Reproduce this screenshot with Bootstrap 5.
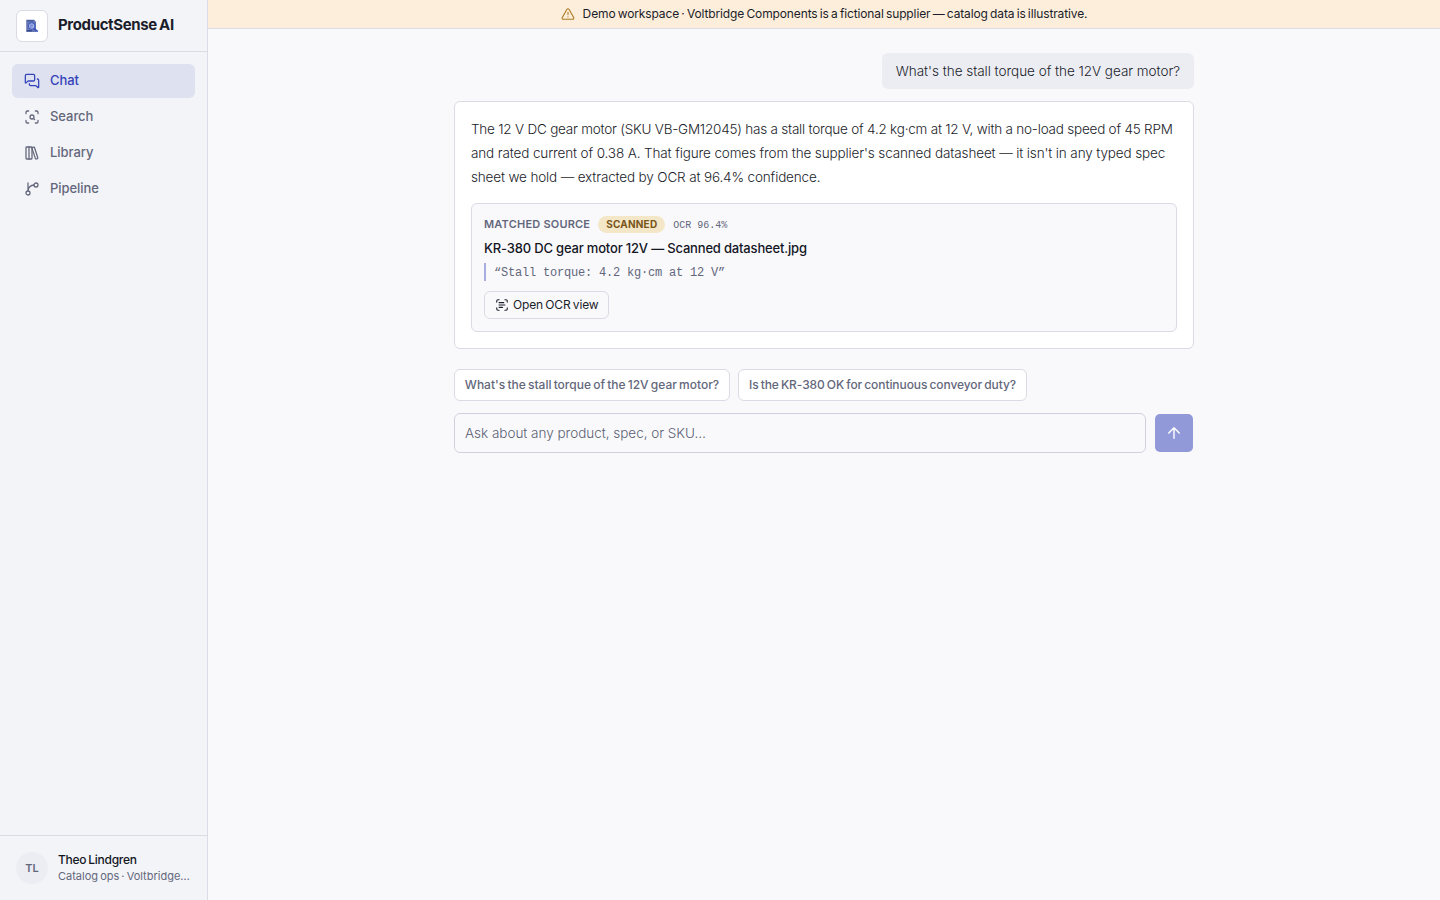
<!DOCTYPE html>
<html lang="en">
<head>
<meta charset="utf-8">
<meta name="viewport" content="width=device-width, initial-scale=1">
<title>ProductSense AI</title>
<link rel="stylesheet" href="https://cdn.jsdelivr.net/npm/bootstrap@5.3.0/dist/css/bootstrap.min.css">
<style>
  :root { --line: #d9dbe5; --ink: #1b1d2a; --soft: #63677b; --brand: #3543b9; }
  body { font-family: Inter, "Liberation Sans", sans-serif; font-size: 14px; color: var(--ink); background: #f9f9fc; }
  svg { flex: none; }
  .line-icon { fill: none; stroke: currentColor; stroke-width: 1.9; stroke-linecap: round; stroke-linejoin: round; }
  .sidebar { width: 208px; background: #f3f4f8; border-right: 1px solid var(--line); }
  .brand-bar { height: 52px; border-bottom: 1px solid var(--line); gap: 10px; }
  .brand-tile { width: 32px; height: 32px; background: #fff; border: 1px solid var(--line); border-radius: 6px; }
  .brand-name { font-size: 15px; font-weight: 650; letter-spacing: -.36px; word-spacing: -1px; line-height: 22px; padding-bottom: 2px; }
  .side-nav { padding: 12px; gap: 2px; }
  .side-nav .nav-link { height: 34px; padding: 0 12px; gap: 10px; border-radius: 6px; font-size: 13px; font-weight: 500; line-height: 1; color: var(--soft); letter-spacing: -.05px; }
  .side-nav .nav-link span { padding-bottom: 2px; }
  .side-nav .nav-link.active { background: #dde1f0; color: var(--brand); }
  .account { height: 65px; border-top: 1px solid var(--line); gap: 10px; }
  .avatar { width: 32px; height: 32px; background: #ecedf3; color: var(--soft); font-size: 11px; font-weight: 600; }
  .account-name { font-size: 12px; font-weight: 500; line-height: 16px; letter-spacing: -.26px; word-spacing: -1px; color: #14161f; }
  .account-role { font-size: 11px; line-height: 16px; letter-spacing: 0; word-spacing: -1px; color: var(--soft); }
  .demo-bar { height: 29px; background: #fdeedb; border-bottom: 1px solid var(--line); gap: 8px; font-size: 12px; letter-spacing: -.125px; word-spacing: -1px; }
  .demo-bar svg { color: #ab7a22; }
  .thread { width: 740px; padding-top: 24px; }
  .ask-bubble { height: 36px; padding: 0 14px; border-radius: 6px; background: #ecedf3; font-size: 13.5px; font-weight: 300; letter-spacing: -.03px; }
  .answer { margin-top: 12px; padding: 16px; border: 1px solid var(--line); border-radius: 6px; background: #fff; height: 248px; }
  .answer-text { height: 86px; font-size: 13.5px; font-weight: 300; line-height: 24px; margin-top: -1px; white-space: nowrap; }
  .run-a { letter-spacing: -.22px; } .run-b { letter-spacing: -.128px; } .run-c { letter-spacing: -.15px; }
  .source { height: 129px; padding: 12px; border: 1px solid var(--line); border-radius: 6px; background: #f9f9fc; }
  .source-tag { font-size: 11px; font-weight: 600; line-height: 17px; letter-spacing: .2px; color: var(--soft); }
  .pill { height: 17px; padding: 0 8px; border-radius: 9px; background: #f3e7c7; color: #785519; font-size: 10px; font-weight: 650; line-height: 17px; letter-spacing: .2px; }
  .mono { font-family: "Liberation Mono", monospace; }
  .ocr-score { font-size: 10px; line-height: 17px; padding-top: 1px; color: var(--soft); height: 17px; }
  .source-title { margin-top: 5px; font-size: 13px; font-weight: 500; line-height: 20px; letter-spacing: -.18px; color: #14161f; }
  .source-quote { margin-top: 5px; height: 18px; padding-left: 8px; border-left: 2px solid #a6addf; font-size: 12px; line-height: 20px; letter-spacing: -.2px; color: var(--soft); }
  .ocr-btn { --bs-btn-padding-y: 0; margin-top: 10px; height: 28px; width: 125px; padding: 0 10px; border: 1px solid var(--line); border-radius: 6px; font-size: 12px; font-weight: 400; line-height: 1; letter-spacing: -.15px; word-spacing: -.9px; gap: 4px; color: var(--ink); white-space: nowrap; }
  .suggest { margin-top: 20px; gap: 8px; }
  .suggest .btn { height: 32px; padding: 0; background: #fff; border: 1px solid var(--line); border-radius: 6px; font-size: 12px; font-weight: 500; line-height: 1; color: var(--soft); white-space: nowrap; word-spacing: -1px; }
  .chip-a { width: 276px; } .chip-b { width: 289px; letter-spacing: -.08px; }
  .composer { margin-top: 12px; gap: 8px; }
  .composer .form-control { height: 40px; padding: 0 10px; border: 1px solid #cfd1e0; border-radius: 6px; background: transparent; font-size: 13.5px; font-weight: 300; letter-spacing: -.02px; }
  .composer .form-control::placeholder { color: #5b5f73; opacity: 1; }
  .send { width: 38px; height: 38px; margin: 1px; padding: 0; border: 0; border-radius: 5px; background: #9199d9; color: #fff; }
</style>
<script src="https://cdn.jsdelivr.net/npm/bootstrap@5.3.0/dist/js/bootstrap.bundle.min.js"></script>
</head>
<body>
<div class="d-flex vh-100 overflow-hidden">
  <aside class="sidebar d-flex flex-column flex-shrink-0">
    <div class="brand-bar d-flex align-items-center px-3">
      <div class="brand-tile d-flex align-items-center justify-content-center">
        <svg width="16" height="16" viewBox="0 0 16 16" fill="none">
          <path d="M2.2 1.8h8l1.8 2V14H2.2z" fill="#6577b4"/>
          <path d="M3.2 2.8h6" stroke="#3c4f90" stroke-width="1"/>
          <circle cx="7.7" cy="8" r="3.2" fill="#a9b7ec" stroke="#4159bd" stroke-width="1.1"/>
          <path d="M6 7.2h3.2M6 9h2.6" stroke="#5469c0" stroke-width=".8"/>
          <path d="M10.4 10.8l3.3 2.9" stroke="#3450bb" stroke-width="1.7"/>
          <path d="M2.9 12.7h5" stroke="#384b8c" stroke-width="1.3"/>
        </svg>
      </div>
      <div class="brand-name">ProductSense AI</div>
    </div>
    <nav class="side-nav nav flex-column flex-nowrap flex-grow-1">
      <a class="nav-link active d-flex align-items-center" href="#">
        <svg class="line-icon" width="16" height="16" viewBox="0 0 24 24"><path d="M16 10a2 2 0 0 1-2 2H6.8a2 2 0 0 0-1.4.6l-2.2 2.2A.7.7 0 0 1 2 14.3V4a2 2 0 0 1 2-2h10a2 2 0 0 1 2 2z"/><path d="M20 9a2 2 0 0 1 2 2v10.3a.7.7 0 0 1-1.2.5l-2.2-2.2a2 2 0 0 0-1.4-.6H10a2 2 0 0 1-2-2v-1"/></svg>
        <span>Chat</span>
      </a>
      <a class="nav-link d-flex align-items-center" href="#">
        <svg class="line-icon" width="16" height="16" viewBox="0 0 24 24"><path d="M3 7V5a2 2 0 0 1 2-2h2M17 3h2a2 2 0 0 1 2 2v2M21 17v2a2 2 0 0 1-2 2h-2M7 21H5a2 2 0 0 1-2-2v-2"/><circle cx="12" cy="12" r="3"/><path d="m16 16-1.9-1.9"/></svg>
        <span>Search</span>
      </a>
      <a class="nav-link d-flex align-items-center" href="#">
        <svg class="line-icon" width="16" height="16" viewBox="0 0 24 24"><rect x="3" y="3" width="9" height="18" rx="1"/><path d="M7.5 3v18"/><path d="M20.7 19.2c.2.5-.1 1.1-.6 1.3l-1.6.5c-.5.2-1.1-.1-1.3-.6L12 5.1c-.2-.5.1-1.1.6-1.3l1.8-.6c.5-.2 1.1.1 1.3.6Z"/></svg>
        <span>Library</span>
      </a>
      <a class="nav-link d-flex align-items-center" href="#">
        <svg class="line-icon" width="16" height="16" viewBox="0 0 24 24"><path d="M6 3v12M15 6a9 9 0 0 0-9 9"/><circle cx="18" cy="6" r="3"/><circle cx="6" cy="18" r="3"/></svg>
        <span>Pipeline</span>
      </a>
    </nav>
    <div class="account d-flex align-items-center px-3">
      <div class="avatar rounded-circle d-flex align-items-center justify-content-center flex-shrink-0">TL</div>
      <div class="text-nowrap">
        <div class="account-name">Theo Lindgren</div>
        <div class="account-role">Catalog ops · Voltbridge…</div>
      </div>
    </div>
  </aside>

  <main class="flex-grow-1 d-flex flex-column">
    <div class="demo-bar d-flex align-items-center justify-content-center flex-shrink-0">
      <svg class="line-icon" width="14" height="14" viewBox="0 0 24 24"><path d="m21.7 18-8-14a2 2 0 0 0-3.5 0l-8 14A2 2 0 0 0 4 21h16a2 2 0 0 0 1.7-3M12 9v4M12 17h.01"/></svg>
      <span>Demo workspace · Voltbridge Components is a fictional supplier — catalog data is illustrative.</span>
    </div>

    <div class="thread mx-auto">
      <div class="d-flex justify-content-end">
        <div class="ask-bubble d-flex align-items-center">What's the stall torque of the 12V gear motor?</div>
      </div>

      <article class="answer">
        <div class="answer-text">
          <span class="run-a">The 12 V DC gear motor (SKU VB-GM12045) has a stall torque of 4.2 kg·cm at 12 V, with a no-load speed of 45 RPM</span><br>
          <span class="run-b">and rated current of 0.38 A. That figure comes from the supplier's scanned datasheet — it isn't in any typed spec</span><br>
          <span class="run-c">sheet we hold — extracted by OCR at 96.4% confidence.</span>
        </div>
        <div class="source">
          <div class="d-flex align-items-center gap-2">
            <span class="source-tag">MATCHED SOURCE</span>
            <span class="pill">SCANNED</span>
            <span class="ocr-score mono">OCR 96.4%</span>
          </div>
          <div class="source-title">KR-380 DC gear motor 12V — Scanned datasheet.jpg</div>
          <div class="source-quote mono">“Stall torque: 4.2 kg·cm at 12 V”</div>
          <button class="btn ocr-btn d-flex align-items-center" type="button">
            <svg class="line-icon" width="14" height="14" viewBox="0 0 24 24"><path d="M3 7V5a2 2 0 0 1 2-2h2M17 3h2a2 2 0 0 1 2 2v2M21 17v2a2 2 0 0 1-2 2h-2M7 21H5a2 2 0 0 1-2-2v-2M7 8h8M7 12h10M7 16h6"/></svg>
            <span>Open OCR view</span>
          </button>
        </div>
      </article>

      <div class="suggest d-flex">
        <button class="btn chip-a" type="button">What's the stall torque of the 12V gear motor?</button>
        <button class="btn chip-b" type="button">Is the KR-380 OK for continuous conveyor duty?</button>
      </div>

      <form class="composer d-flex align-items-center">
        <input class="form-control" type="text" placeholder="Ask about any product, spec, or SKU…">
        <button class="btn send d-flex align-items-center justify-content-center flex-shrink-0" type="button" aria-label="Send">
          <svg class="line-icon" width="18" height="18" viewBox="0 0 24 24"><path d="m5 12 7-7 7 7M12 19V5"/></svg>
        </button>
      </form>
    </div>
  </main>
</div>
</body>
</html>
